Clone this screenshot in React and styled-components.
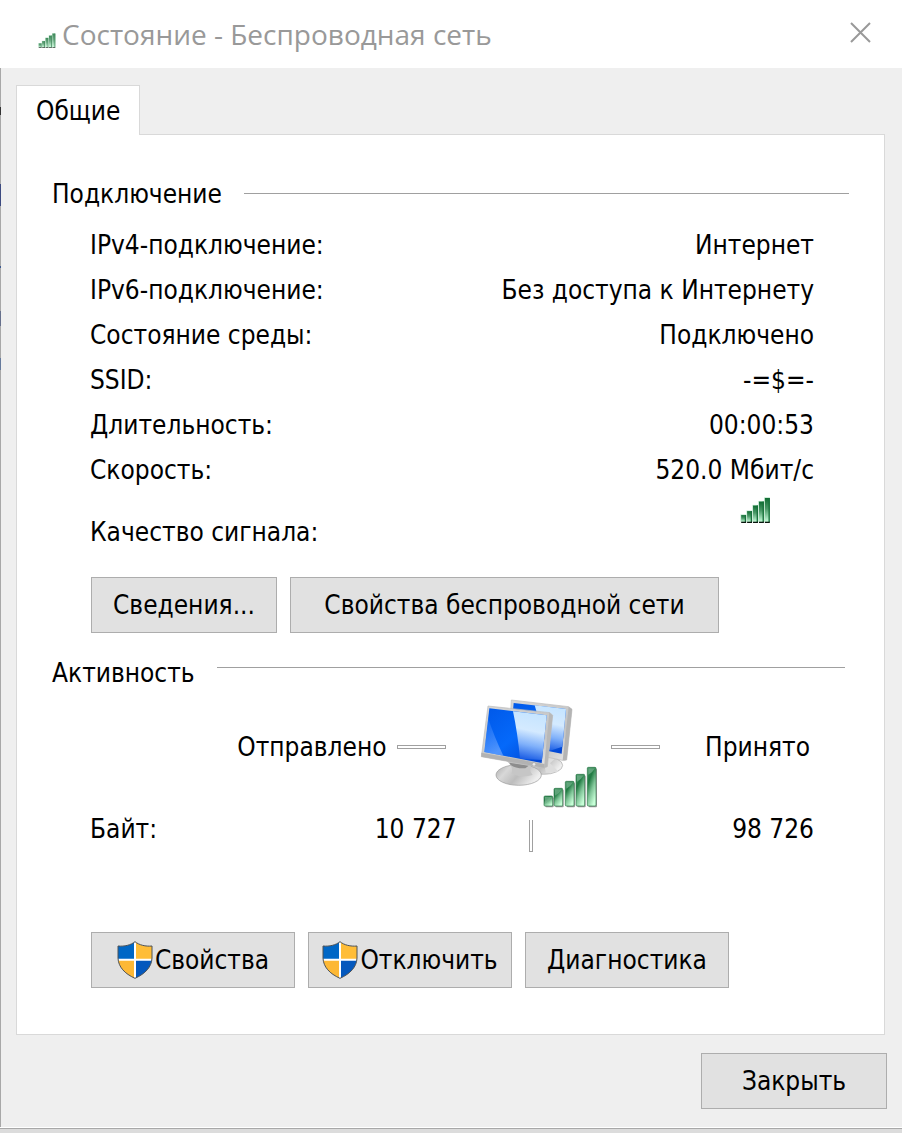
import styled, { createGlobalStyle } from "styled-components";

const GlobalStyle = createGlobalStyle`
  *, *::before, *::after {
    box-sizing: border-box;
  }

  body {
    margin: 0;
    background: #dcdcdc;
    color: #000;
    font-family: Tahoma, "DejaVu Sans Condensed", "Noto Sans", sans-serif;
    font-size: 26px;
    line-height: 32px;
  }
`;

const Window = styled.main`
  display: flex;
  flex-direction: column;
  min-height: calc(100vh - 4px);
  background: #efefef;
  border-bottom: 1px solid #a8a8a8;
  box-shadow: 0 1px 4px #999;
`;

const TitleBar = styled.header`
  display: flex;
  align-items: center;
  height: 68px;
  padding: 0 30px 0 38px;
  background: #fff;
`;

const Title = styled.h1`
  flex: 1;
  margin: 0 0 0 6px;
  color: #999;
  font-family: "Open Sans", "Noto Sans", sans-serif;
  font-size: 28px;
  font-weight: 400;
  white-space: nowrap;
`;

const TitleSignal = styled.span`
  display: flex;
  padding-top: 13px;
  opacity: 0.8;
`;

const CloseIconButton = styled.button`
  display: flex;
  padding: 0;
  margin-bottom: 3px;
  border: 0;
  background: none;
  color: #999;
`;

const Body = styled.div`
  flex: 1;
  padding: 17px 15px 18px 16px;
  border-bottom: 1px solid #fff;
  background:
    linear-gradient(
      #a8a8a8 39px, #333 39px 47px, #a8a8a8 47px 116px,
      #3c4a80 116px 138px, #a8a8a8 138px 198px,
      #3c5a90 198px 200px, #a8a8a8 200px 243px,
      #66708c 243px 258px, #a8a8a8 258px 290px,
      #667a9c 290px 302px, #a8a8a8 302px
    ) left top / 1px 100% no-repeat;
`;

const Tab = styled.button`
  position: relative;
  display: block;
  height: 50px;
  margin-bottom: -1px;
  padding: 0 19px;
  border: 1px solid #d9d9d9;
  border-bottom: 0;
  background: #fff;
  color: inherit;
  font: inherit;
`;

const Panel = styled.section`
  margin-right: 2px;
  padding: 43px 35px 46px;
  border: 1px solid #d9d9d9;
  background: #fff;
`;

const GroupTitle = styled.h2`
  display: flex;
  gap: 22px;
  margin: 0;
  font-size: inherit;
  font-weight: 400;

  &::after {
    content: "";
    flex: 1;
    height: 1px;
    margin-top: ${(props) => props.$ruleTop};
    margin-right: ${(props) => props.$ruleEnd};
    background: #a0a0a0;
  }
`;

const Content = styled.div`
  padding: 0 35px 0 38px;
`;

const Connection = styled(Content)`
  padding-bottom: 24px;
`;

const Status = styled.dl`
  margin: 0;
  padding-top: 12px;
`;

const StatusRow = styled.div`
  display: flex;
  justify-content: space-between;
  align-items: ${(props) => (props.$tall ? "flex-end" : "center")};
  height: ${(props) => (props.$tall ? "56px" : "45px")};

  dd {
    margin: 0;
  }
`;

const SignalValue = styled.dd`
  align-self: flex-start;
  padding: 5px 43px 0 0;
`;

const Buttons = styled.div`
  display: flex;
  flex-wrap: wrap;
  gap: 13px;
  padding-top: ${(props) => props.$top};
  padding-left: 1px;
`;

const Button = styled.button`
  display: flex;
  align-items: center;
  justify-content: center;
  gap: 2px;
  height: 56px;
  min-width: ${(props) => props.$width || "204px"};
  padding: 0;
  border: 1px solid #adadad;
  background: #e1e1e1;
  color: inherit;
  font: inherit;
`;

const Activity = styled.div`
  display: grid;
  grid-template-columns: 7fr 148px 4fr;
  align-items: start;
`;

const Sent = styled.div`
  display: flex;
  align-items: center;
  justify-content: flex-end;
  gap: 10px;
  padding: 42px 11px 0 0;
`;

const Received = styled.div`
  display: flex;
  align-items: center;
  justify-content: space-between;
  padding: 42px 4px 0 6px;
`;

const Computers = styled.div`
  display: flex;
  justify-content: center;
  padding: 10px 0 0 16px;
`;

const Dash = styled.span`
  width: 49px;
  height: 4px;
  border: 1px solid #a0a0a0;
`;

const Stem = styled.span`
  justify-self: center;
  width: 4px;
  height: 32px;
  margin-top: 11px;
  border: 1px solid #a0a0a0;
  border-top: 0;
`;

const Bytes = styled.div`
  display: flex;
  justify-content: space-between;
  padding-top: 4px;
`;

const BytesReceived = styled(Bytes)`
  justify-content: flex-end;
`;

const Footer = styled.footer`
  display: flex;
  justify-content: flex-end;
  padding-top: 18px;
`;

const signalBars = [
  [182, 105],
  [200, 93],
  [218, 76],
  [236, 64],
  [254, 53],
];

function Signal({ id, width, height }) {
  return (
    <svg width={width} height={height} viewBox="180 50 93 79" aria-hidden="true">
      <defs>
        <linearGradient id={id} x1="0" y1="0" x2="0" y2="1">
          <stop offset="0" stopColor="#0f6b32" />
          <stop offset="0.45" stopColor="#4b9a68" />
          <stop offset="1" stopColor="#c8ffdc" />
        </linearGradient>
      </defs>
      {signalBars.map(([x, y]) => (
        <g key={x}>
          <rect x={x - 1} y={y - 2} width="17" height={127 - y} fill="#b9e6c8" />
          <rect x={x + 1} y={y} width="15" height={126 - y} fill={`url(#${id})`} />
          <rect x={x + 12} y={y} width="4" height={126 - y} fill="#17713a" />
          <rect x={x + 1} y="125" width="15" height="4" fill="#08150d" />
        </g>
      ))}
    </svg>
  );
}

function Shield() {
  return (
    <svg width="36" height="38" viewBox="0 0 108 114" aria-hidden="true">
      <defs>
        <clipPath id="shield">
          <path d="M54 2C42 12 22 17 3 15V51C4 78 23 98 54 112C85 98 104 78 105 51V15C86 17 66 12 54 2Z" />
        </clipPath>
      </defs>
      <g clipPath="url(#shield)">
        <path d="M0 0H54V56H0Z" fill="#0067c6" />
        <path d="M54 0H108V56H54Z" fill="#ffbd37" />
        <path d="M0 56H54V114H0Z" fill="#fdb835" />
        <path d="M54 56H108V114H54Z" fill="#0458bd" />
        <path d="M54 0V114M0 56H108" stroke="#fff" strokeWidth="6" />
      </g>
      <path
        d="M54 2C42 12 22 17 3 15V51C4 78 23 98 54 112C85 98 104 78 105 51V15C86 17 66 12 54 2Z"
        fill="none"
        stroke="#4d5257"
        strokeWidth="3"
      />
    </svg>
  );
}

const bigBars = [
  [252, 348],
  [282, 325],
  [316, 304],
  [348, 283],
  [382, 262],
];

function ComputersIcon() {
  return (
    <svg width="118" height="110" viewBox="60 57 354 330" aria-hidden="true">
      <defs>
        <linearGradient id="screen" x1="0" y1="0" x2="1" y2="1">
          <stop offset="0" stopColor="#0058e8" />
          <stop offset="0.5" stopColor="#0569fa" />
          <stop offset="1" stopColor="#0040cc" />
        </linearGradient>
        <linearGradient id="glare" x1="0.6" y1="0" x2="0.45" y2="1">
          <stop offset="0" stopColor="#c4e4ff" />
          <stop offset="0.4" stopColor="#d4eaff" />
          <stop offset="0.7" stopColor="#7fb0fa" />
          <stop offset="1" stopColor="#1a5ce4" />
        </linearGradient>
        <linearGradient id="corner" x1="0" y1="0" x2="0.3" y2="1">
          <stop offset="0" stopColor="#3585ff" stopOpacity="0.3" />
          <stop offset="1" stopColor="#82b2ff" stopOpacity="0.6" />
        </linearGradient>
        <linearGradient id="frame" x1="0" y1="0" x2="1" y2="1">
          <stop offset="0" stopColor="#d8d8d8" />
          <stop offset="0.7" stopColor="#c4c4c4" />
          <stop offset="1" stopColor="#ededed" />
        </linearGradient>
        <linearGradient id="base" x1="0" y1="0" x2="1" y2="0.4">
          <stop offset="0" stopColor="#aaa" />
          <stop offset="0.3" stopColor="#d8d8d8" />
          <stop offset="0.6" stopColor="#bdbdbd" />
          <stop offset="1" stopColor="#eee" />
        </linearGradient>
        <linearGradient id="bar" x1="0" y1="0" x2="0.6" y2="1">
          <stop offset="0" stopColor="#3d9160" />
          <stop offset="0.35" stopColor="#207a42" />
          <stop offset="0.65" stopColor="#7fc497" />
          <stop offset="1" stopColor="#c8ffd8" />
        </linearGradient>
      </defs>

      <ellipse cx="250" cy="256" rx="58" ry="27" fill="url(#base)" stroke="#aaa" strokeWidth="2" />
      <path d="M245 222L290 232L270 250L296 275L258 278Z" fill="#ddd" />
      <path d="M154 60L326 80L336 88L320 240L312 242L146 208Z" fill="url(#frame)" stroke="#bbb" strokeWidth="2" />
      <path d="M326 80L336 88L320 240L308 240Z" fill="#b4b4b4" />
      <path d="M161 69L318 87L305 221L150 190Z" fill="url(#screen)" />
      <path d="M224 76L318 87L307 200L270 212L245 150Z" fill="url(#glare)" />

      <ellipse cx="176" cy="285" rx="68" ry="31" fill="url(#base)" stroke="#999" strokeWidth="2" />
      <path d="M139 242L216 255Q204 270 218 285Q184 296 154 280Q163 262 139 242Z" fill="#c6c6c6" />
      <path d="M148 248L206 257L196 265Q166 266 152 255Z" fill="#8d8d8d" />
      <path d="M84 78L270 98L278 106L262 260L254 264L64 230Z" fill="url(#frame)" stroke="#bbb" strokeWidth="2" />
      <path d="M64 218L254 252L254 264L64 230Z" fill="#b2b2b2" />
      <path d="M268 98L278 106L262 260L252 263Z" fill="#b8b8b8" />
      <path d="M88 85L260 106L245 249L73 216Z" fill="url(#screen)" />
      <path d="M159 94L260 106L246 240L180 236Q173 160 159 94Z" fill="url(#glare)" />
      <path d="M85 116Q102 168 130 227L73 216Z" fill="url(#corner)" />
      <circle cx="222" cy="253" r="4" fill="#e9e9e9" />

      {bigBars.map(([x, y]) => (
        <g key={x}>
          <rect x={x + 4} y={y + 4} width="25" height={378 - y} rx="3" fill="#999" />
          <rect x={x} y={y} width="26" height={378 - y} rx="3" fill="url(#bar)" stroke="#317a4c" strokeWidth="2" />
          <path d={`M${x + 3} ${y + 3}H${x + 23}Q${x + 16} ${y + 16} ${x + 3} ${y + 22}Z`} fill="#86bd9b" opacity="0.6" />
        </g>
      ))}
    </svg>
  );
}

const statusRows = [
  ["IPv4-подключение:", "Интернет"],
  ["IPv6-подключение:", "Без доступа к Интернету"],
  ["Состояние среды:", "Подключено"],
  ["SSID:", "-=$=-"],
  ["Длительность:", "00:00:53"],
  ["Скорость:", "520.0 Мбит/с"],
];

export default function App() {
  return (
    <>
      <GlobalStyle />
      <Window>
        <TitleBar>
          <TitleSignal>
            <Signal id="signal-title" width={18} height={15} />
          </TitleSignal>
          <Title>Состояние - Беспроводная сеть</Title>
          <CloseIconButton type="button" aria-label="Закрыть окно">
            <svg width="22" height="22" viewBox="0 0 22 22">
              <path d="M1 1L20 20M20 1L1 20" stroke="currentColor" strokeWidth="2" />
            </svg>
          </CloseIconButton>
        </TitleBar>
        <Body>
          <Tab type="button" role="tab" aria-selected="true">
            Общие
          </Tab>
          <Panel>
            <GroupTitle $ruleTop="15px" $ruleEnd="0">
              Подключение
            </GroupTitle>
            <Connection>
              <Status>
                {statusRows.map(([name, value]) => (
                  <StatusRow key={name}>
                    <dt>{name}</dt>
                    <dd>{value}</dd>
                  </StatusRow>
                ))}
                <StatusRow $tall>
                  <dt>Качество сигнала:</dt>
                  <SignalValue>
                    <Signal id="signal-quality" width={31} height={26} />
                  </SignalValue>
                </StatusRow>
              </Status>
              <Buttons $top="29px">
                <Button type="button" $width="186px">
                  Сведения...
                </Button>
                <Button type="button" $width="429px">
                  Свойства беспроводной сети
                </Button>
              </Buttons>
            </Connection>
            <GroupTitle $ruleTop="10px" $ruleEnd="4px">
              Активность
            </GroupTitle>
            <Content>
              <Activity>
                <Sent>
                  Отправлено
                  <Dash />
                </Sent>
                <Computers>
                  <ComputersIcon />
                </Computers>
                <Received>
                  <Dash />
                  Принято
                </Received>
                <Bytes>
                  <span>Байт:</span>
                  <span>10 727</span>
                </Bytes>
                <Stem />
                <BytesReceived>98 726</BytesReceived>
              </Activity>
              <Buttons $top="80px">
                <Button type="button">
                  <Shield />
                  Свойства
                </Button>
                <Button type="button">
                  <Shield />
                  Отключить
                </Button>
                <Button type="button">Диагностика</Button>
              </Buttons>
            </Content>
          </Panel>
          <Footer>
            <Button type="button" $width="186px">
              Закрыть
            </Button>
          </Footer>
        </Body>
      </Window>
    </>
  );
}
